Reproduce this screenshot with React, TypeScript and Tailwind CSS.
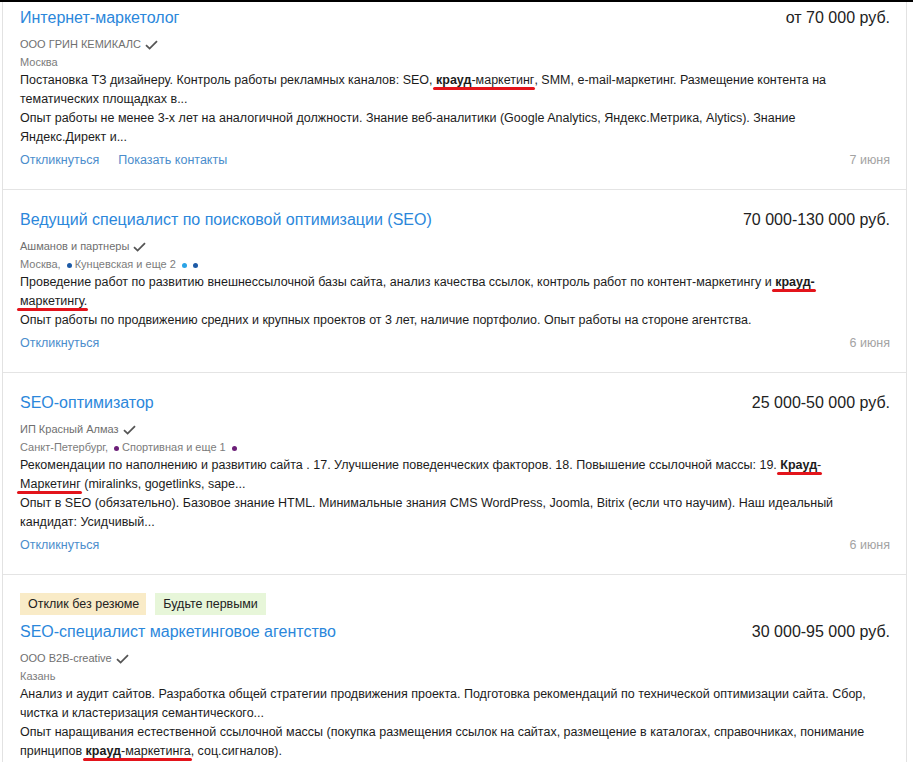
import React from "react";

type Line = React.ReactNode;

type Vacancy = {
  badges?: boolean;
  title: string;
  salary: string;
  company: string;
  city: React.ReactNode;
  lines: Line[];
  contacts?: boolean;
  date?: string;
};

// red hand-drawn underline over the text
function Mark({ children }: { children: React.ReactNode }) {
  return (
    <span className="relative">
      {children}
      <span className="absolute left-[-3px] right-[-1px] bottom-[-3px] h-[3px] rounded-full bg-[#e3141b]" />
    </span>
  );
}

function Check() {
  return (
    <svg width="13" height="10" viewBox="0 0 13 10" className="ml-[4px] inline-block">
      <path d="M1 5.2 L4.6 8.6 L12 1.2" fill="none" stroke="#555" strokeWidth="1.8" />
    </svg>
  );
}

function Dot({ color }: { color: string }) {
  return <span className={`inline-block w-[5px] h-[5px] rounded-full mx-[3px] align-middle ${color}`} />;
}

const vacancies: Vacancy[] = [
  {
    title: "Интернет-маркетолог",
    salary: "от 70 000 руб.",
    company: "ООО ГРИН КЕМИКАЛС",
    city: "Москва",
    lines: [
      <>
        Постановка ТЗ дизайнеру. Контроль работы рекламных каналов: SEO,{" "}
        <Mark>
          <b>крауд</b>-маркетинг
        </Mark>
        , SMM, e-mail-маркетинг. Размещение контента на
      </>,
      "тематических площадках в...",
      "Опыт работы не менее 3-х лет на аналогичной должности. Знание веб-аналитики (Google Analytics, Яндекс.Метрика, Alytics). Знание",
      "Яндекс.Директ и...",
    ],
    contacts: true,
    date: "7 июня",
  },
  {
    title: "Ведущий специалист по поисковой оптимизации (SEO)",
    salary: "70 000-130 000 руб.",
    company: "Ашманов и партнеры",
    city: (
      <>
        Москва, <Dot color="bg-[#1d5aa6]" />
        Кунцевская и еще 2 <Dot color="bg-[#2aa3e6]" />
        <Dot color="bg-[#1d5aa6]" />
      </>
    ),
    lines: [
      <>
        Проведение работ по развитию внешнессылочной базы сайта, анализ качества ссылок, контроль работ по контент-маркетингу и{" "}
        <Mark>
          <b>крауд-</b>
        </Mark>
      </>,
      <Mark>маркетингу.</Mark>,
      "Опыт работы по продвижению средних и крупных проектов от 3 лет, наличие портфолио. Опыт работы на стороне агентства.",
    ],
    date: "6 июня",
  },
  {
    title: "SEO-оптимизатор",
    salary: "25 000-50 000 руб.",
    company: "ИП Красный Алмаз",
    city: (
      <>
        Санкт-Петербург, <Dot color="bg-[#6c1f78]" />
        Спортивная и еще 1 <Dot color="bg-[#6c1f78]" />
      </>
    ),
    lines: [
      <>
        Рекомендации по наполнению и развитию сайта . 17. Улучшение поведенческих факторов. 18. Повышение ссылочной массы: 19.{" "}
        <Mark>
          <b>Крауд</b>-
        </Mark>
      </>,
      <>
        <Mark>Маркетинг</Mark> (miralinks, gogetlinks, sape...
      </>,
      "Опыт в SEO (обязательно). Базовое знание HTML. Минимальные знания CMS WordPress, Joomla, Bitrix (если что научим). Наш идеальный",
      "кандидат: Усидчивый...",
    ],
    date: "6 июня",
  },
  {
    badges: true,
    title: "SEO-специалист маркетинговое агентство",
    salary: "30 000-95 000 руб.",
    company: "ООО B2B-creative",
    city: "Казань",
    lines: [
      "Анализ и аудит сайтов. Разработка общей стратегии продвижения проекта. Подготовка рекомендаций по технической оптимизации сайта. Сбор,",
      "чистка и кластеризация семантического...",
      "Опыт наращивания естественной ссылочной массы (покупка размещения ссылок на сайтах, размещение в каталогах, справочниках, понимание",
      <>
        принципов{" "}
        <Mark>
          <b>крауд</b>-маркетинга
        </Mark>
        , соц.сигналов).
      </>,
    ],
  },
];

function Card({ v, first }: { v: Vacancy; first: boolean }) {
  return (
    <div className={`pl-[17px] pr-[16px] pb-[19px] ${first ? "pt-[4px]" : "pt-[18px] border-t border-[#e4e4e4]"}`}>
      {v.badges && (
        <div className="flex gap-[9px] mb-[5px]">
          <span className="h-[22px] leading-[22px] pl-[8px] pr-[7px] text-[12.5px] text-[#222] bg-[#f9ebc7]">Отклик без резюме</span>
          <span className="h-[22px] leading-[22px] px-[8px] text-[12.5px] text-[#222] bg-[#e7f6d9]">Будьте первыми</span>
        </div>
      )}
      <div className="flex justify-between items-start h-[24px] leading-[24px] text-[16px]">
        <span className="text-[#2b87db]">{v.title}</span>
        <span className="text-[#222]">{v.salary}</span>
      </div>
      <div className="mt-[6px] flex items-center h-[17px] leading-[17px] text-[11px] text-[#6f6f6f]">
        {v.company}
        <Check />
      </div>
      <div className="h-[18px] leading-[18px] text-[11px] text-[#7c7c7c]">{v.city}</div>
      <div className="text-[12.5px] leading-[19px] text-[#1c1c1c]">
        {v.lines.map((l, i) => (
          <div key={i} className="whitespace-nowrap">
            {l}
          </div>
        ))}
      </div>
      {v.date && (
        <div className="mt-[3px] flex justify-between h-[20px] leading-[20px] text-[12.5px]">
          <div className="flex gap-[19px] text-[#4b8dcc]">
            <span>Откликнуться</span>
            {v.contacts && <span>Показать контакты</span>}
          </div>
          <span className="text-[#a3a3a3]">{v.date}</span>
        </div>
      )}
    </div>
  );
}

export default function App() {
  return (
    <div className="w-[913px] h-[762px] overflow-hidden bg-white font-['Liberation_Sans',Arial,sans-serif]">
      <div className="h-[2px] bg-black" />
      <div className="ml-[2px] w-[905px] min-h-[760px] border-l border-r border-[#e2e2e2]">
        {vacancies.map((v, i) => (
          <Card key={i} v={v} first={i === 0} />
        ))}
      </div>
    </div>
  );
}
